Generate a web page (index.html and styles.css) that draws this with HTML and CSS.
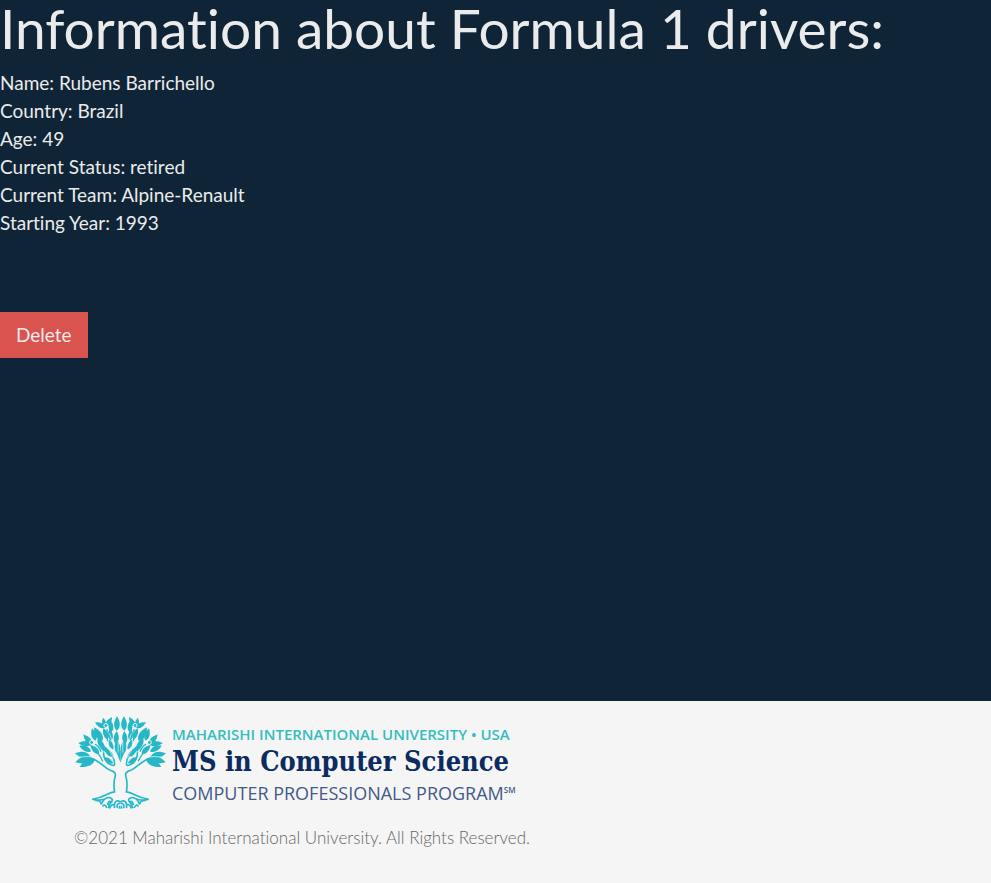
FILE: index.html
```html
<!DOCTYPE html>
<html lang="en">
<head>
<meta charset="utf-8">
<meta name="viewport" content="width=device-width, initial-scale=1">
<title>Formula 1 drivers</title>
<link rel="stylesheet" href="styles.css">
</head>
<body>
<main>
  <h1>Information about Formula 1 drivers:</h1>
  <ul class="details">
    <li>Name: Rubens Barrichello</li>
    <li>Country: Brazil</li>
    <li>Age: 49</li>
    <li>Current Status: retired</li>
    <li>Current Team: Alpine-Renault</li>
    <li>Starting Year: 1993</li>
  </ul>
  <button class="delete" type="button">Delete</button>
</main>
<footer>
  <div class="brand">
    <svg class="tree" viewBox="12 15 280 288" aria-hidden="true">
      <defs>
        <path id="leaf" d="M0 0C-13-12-11-28 0-46C11-28 13-12 0 0Z"/>
        <g id="half">
          <g fill="#25b9c7">
            <use href="#leaf" transform="translate(141 62) rotate(1) scale(.95)"/>
            <use href="#leaf" transform="translate(125 66) rotate(-6) scale(.8)"/>
            <use href="#leaf" transform="translate(106 54) rotate(-12) scale(.7)"/>
            <use href="#leaf" transform="translate(106 53) rotate(-62) scale(.75)"/>
            <use href="#leaf" transform="translate(108 50) rotate(32) scale(.75)"/>
            <use href="#leaf" transform="translate(98 92) rotate(-32) scale(1.05)"/>
            <use href="#leaf" transform="translate(77 92) rotate(-16) scale(.85)"/>
            <use href="#leaf" transform="translate(113 88) rotate(-20) scale(.8)"/>
            <use href="#leaf" transform="translate(66 102) rotate(-42) scale(.85)"/>
            <use href="#leaf" transform="translate(66 102) rotate(-86) scale(.9)"/>
            <use href="#leaf" transform="translate(63 124) rotate(-64) scale(.85)"/>
            <use href="#leaf" transform="translate(60 138) rotate(-80)"/>
            <use href="#leaf" transform="translate(68 142) rotate(-106) scale(1.18)"/>
            <use href="#leaf" transform="translate(76 146) rotate(-118) scale(1.15)"/>
            <use href="#leaf" transform="translate(88 132) rotate(-44) scale(.85)"/>
            <use href="#leaf" transform="translate(102 124) rotate(-24)"/>
            <use href="#leaf" transform="translate(124 92) rotate(-8) scale(.8)"/>
            <use href="#leaf" transform="translate(130 118) rotate(-24) scale(.7)"/>
            <use href="#leaf" transform="translate(138 102) rotate(4) scale(.85)"/>
            <use href="#leaf" transform="translate(144 132) rotate(-4) scale(.95)"/>
            <use href="#leaf" transform="translate(129 140) rotate(-48) scale(.8)"/>
            <use href="#leaf" transform="translate(130 160) rotate(-58) scale(.75)"/>
            <path d="M122 106C133 112 140 123 152 158V118L145 126C143 132 134 116 122 102Z"/>
          </g>
          <g fill="none" stroke="#25b9c7" stroke-width="5">
            <path d="M105 114C97 130 102 154 120 163C130 167 134 169 134 162C134 140 122 125 105 112Z"/>
            <path d="M60 144C89 150 99 172 121 181Q140 186 136 199Q130 217 134 246C114 247 105 264 67 268C84 272 95 272 105 267"/>
            <path d="M82 127Q92 140 99 154M112 57Q109 77 113 93M124 59Q119 76 124 91M75 102Q88 109 93 125" stroke-width="4"/>
            <path d="M76 272Q94 271 94 284Q103 262 118 263Q136 268 120 282L115 295M113 286C116 269 126 274 121 281M134 295C132 275 140 269 152 276"/>
            <path d="M143 295C138 286 145 280 152 280M149 297V288"/>
            <path d="M98 290Q104 280 111 294M119 296Q124 281 134 285"/>
          </g>
          <path d="M91 60L108 90Q115 118 132 145M77 92Q87 112 103 128M30 141Q54 136 78 144M119 70L135 118M103 124L130 158M145 91V128" fill="none" stroke="#f5f5f5" stroke-width="2"/>
          <circle cx="108" cy="46" r="6" fill="#25b9c7" stroke="#f5f5f5" stroke-width="3"/>
          <circle cx="65" cy="97" r="6" fill="#25b9c7" stroke="#f5f5f5" stroke-width="3"/>
        </g>
      </defs>
      <use href="#half"/>
      <use href="#half" transform="translate(304 0) scale(-1 1)"/>
    </svg>
    <div class="wordmark">
      <div class="university">MAHARISHI INTERNATIONAL UNIVERSITY • USA</div>
      <div class="degree">MS in Computer Science</div>
      <div class="program">COMPUTER PROFESSIONALS PROGRAM<sup>SM</sup></div>
    </div>
  </div>
  <p class="copyright">©2021 Maharishi International University. All Rights Reserved.</p>
</footer>
</body>
</html>
```
FILE: styles.css
```css
* { box-sizing: border-box; }
body {
  margin: 0;
  min-height: 100vh;
  display: flex;
  flex-direction: column;
  background: #0f2537;
  color: #ebebeb;
  font: 19px/28px Lato, sans-serif;
  font-variant-ligatures: none;
}
main { flex: 1; }
h1 {
  margin: 0 0 13px;
  font-size: 55px;
  font-weight: 400;
  line-height: 56px;
}
.details {
  margin: 0 0 75px;
  padding: 0;
  list-style: none;
}
.delete {
  display: block;
  padding: 9px 16px;
  border: 0;
  background: #d9534f;
  color: #ebebeb;
  font: inherit;
}
footer {
  padding: 14px 74px 31px;
  background: #f5f5f5;
}
.brand {
  display: flex;
  gap: 5px;
}
.tree {
  width: 93px;
  height: 96px;
  flex: none;
}
.wordmark {
  padding-top: 8px;
  white-space: nowrap;
}
.university {
  color: #35bdc0;
  font: 600 15px/22px "Open Sans", sans-serif;
}
.degree {
  color: #0b2b61;
  font: bold 27px/34px "DejaVu Serif Condensed", "DejaVu Serif", serif;
}
.program {
  color: #435988;
  font: 18px/28px "Open Sans", sans-serif;
}
.program sup {
  font-size: 8px;
  line-height: 0;
  font-weight: 600;
}
.copyright {
  margin: 13px 0 0;
  color: #666;
  font-size: 17px;
  font-weight: 300;
}
```
